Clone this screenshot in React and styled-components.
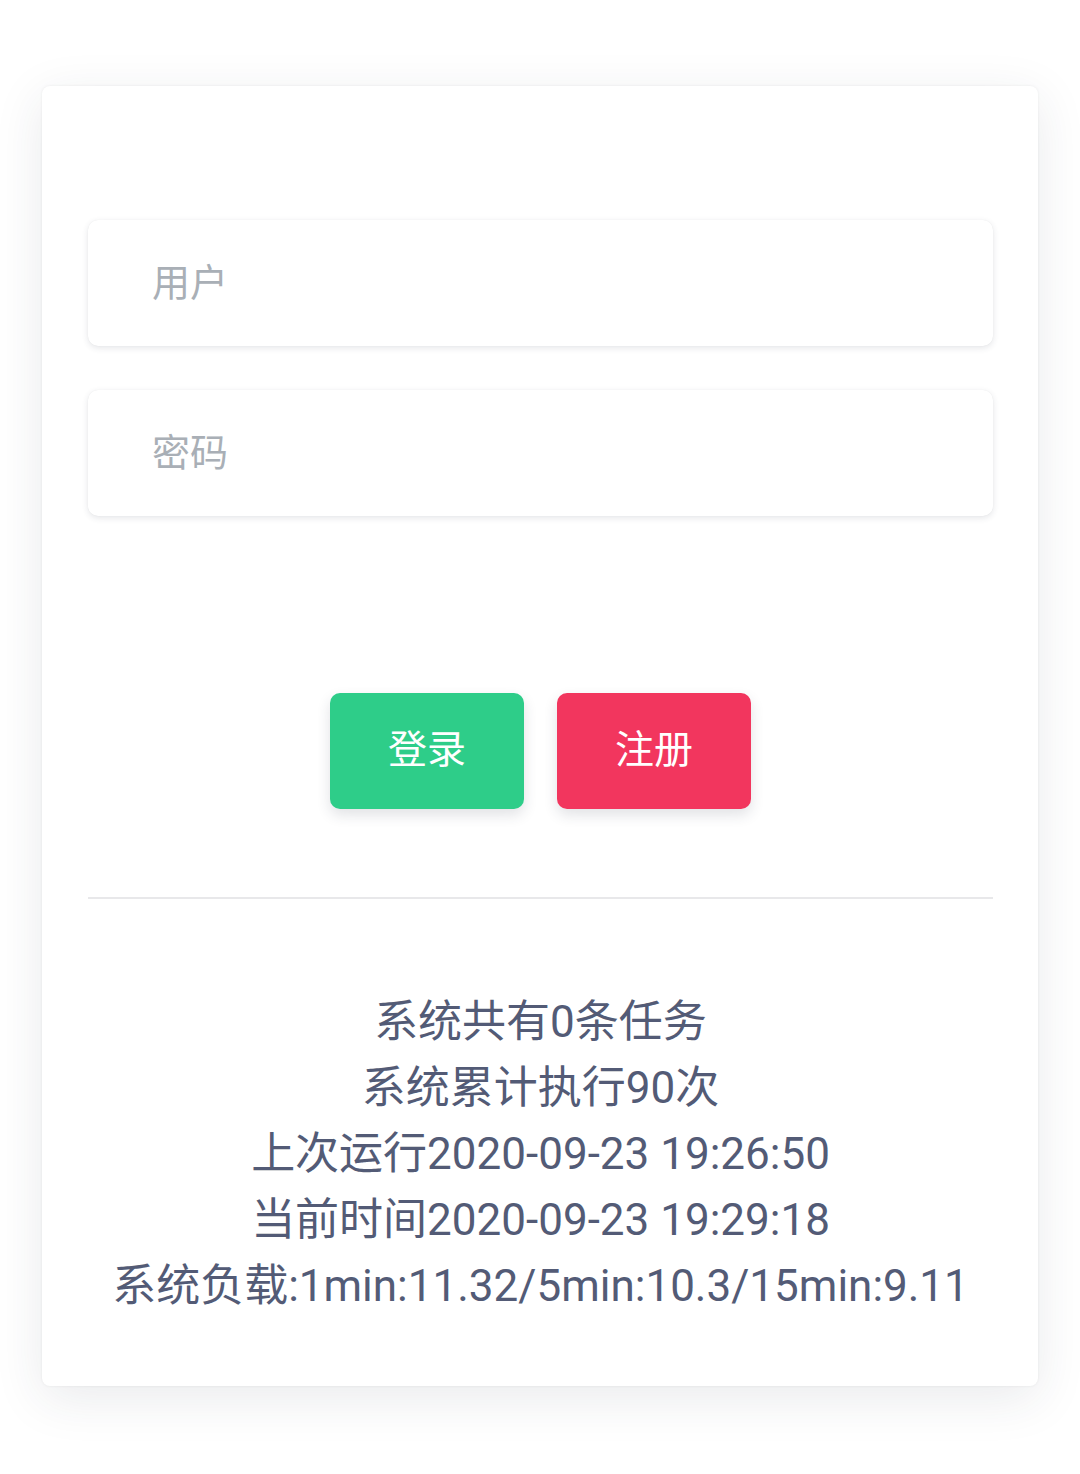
import React from 'react';
import styled, { createGlobalStyle } from 'styled-components';

const GlobalStyle = createGlobalStyle`
    html, body {
        margin: 0;
        padding: 0;
        background: #ffffff;
        font-family: Roboto, "Noto Sans CJK SC", sans-serif;
    }
`;

const Page = styled.div`
    width: 1080px;
    height: 1474px;
    box-sizing: border-box;
    padding: 86px 42px 0 42px;
    background: #ffffff;
`;

const Card = styled.div`
    box-sizing: border-box;
    width: 996px;
    height: 1300px;
    padding: 134px 45px 0 46px;
    background: #ffffff;
    border-radius: 8px;
    box-shadow: 0 12px 50px rgba(40, 50, 70, 0.1), 0 0 3px rgba(0, 0, 0, 0.07);
    display: flex;
    flex-direction: column;
`;

const Field = styled.input`
    box-sizing: border-box;
    width: 905px;
    height: 126px;
    margin-bottom: ${({ $gap }) => $gap}px;
    padding: 0 0 0 64px;
    border: none;
    outline: none;
    border-radius: 10px;
    background: #ffffff;
    box-shadow: 0 2px 6px rgba(40, 50, 70, 0.12), 0 0 1px rgba(0, 0, 0, 0.08);
    font-family: Roboto, "Noto Sans CJK SC", sans-serif;
    font-size: 38px;
    color: #4f5875;

    &::placeholder {
        color: #a9afb6;
    }
`;

const ButtonRow = styled.div`
    display: flex;
    justify-content: center;
    gap: 33px;
    margin-top: 1px;
`;

const Button = styled.button`
    width: 194px;
    height: 116px;
    padding: 0 0 2px 0;
    border: none;
    border-radius: 10px;
    background: ${({ $color }) => $color};
    color: #ffffff;
    font-family: Roboto, "Noto Sans CJK SC", sans-serif;
    font-size: 39px;
    line-height: 1;
    box-shadow: 0 6px 14px rgba(40, 50, 70, 0.14);
    cursor: pointer;
`;

const Divider = styled.div`
    height: 2px;
    width: 905px;
    background: #e8e8ea;
    margin-top: 88px;
`;

const Stats = styled.div`
    margin-top: 90px;
    display: flex;
    flex-direction: column;
    align-items: center;
`;

const StatLine = styled.div`
    font-family: Roboto, "Noto Sans CJK SC", sans-serif;
    font-size: 44px;
    line-height: 66px;
    color: #535b76;
    white-space: nowrap;
`;

const stats = [
    '系统共有0条任务',
    '系统累计执行90次',
    '上次运行2020-09-23 19:26:50',
    '当前时间2020-09-23 19:29:18',
    '系统负载:1min:11.32/5min:10.3/15min:9.11',
];

const App = () => {
    return (
        <Page>
            <GlobalStyle />
            <Card>
                <Field $gap={44} placeholder="用户" />
                <Field $gap={176} type="password" placeholder="密码" />
                <ButtonRow>
                    <Button $color="#2ecd89">登录</Button>
                    <Button $color="#f2365e">注册</Button>
                </ButtonRow>
                <Divider />
                <Stats>
                    {stats.map(line => (
                        <StatLine key={line}>{line}</StatLine>
                    ))}
                </Stats>
            </Card>
        </Page>
    );
};

export default App;
